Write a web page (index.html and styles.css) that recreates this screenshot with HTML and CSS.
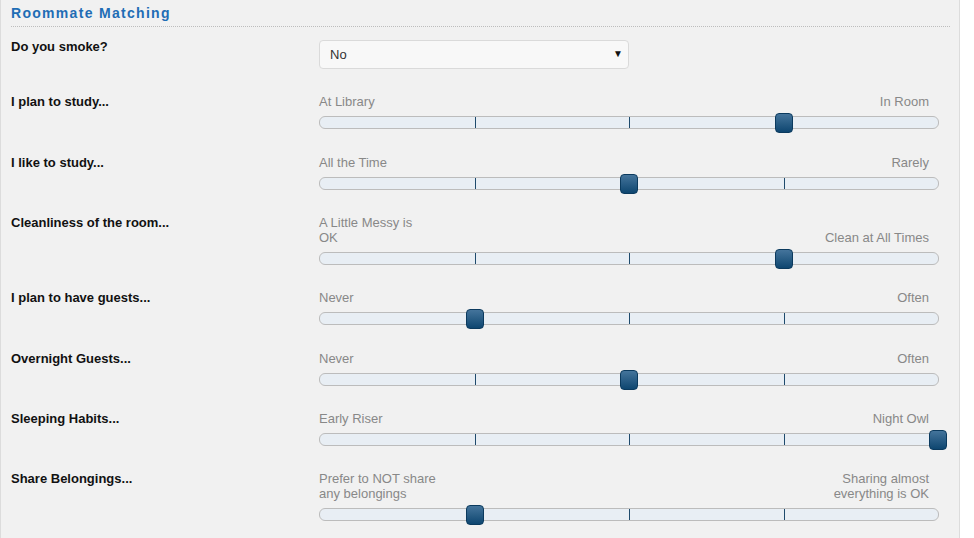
FILE: index.html
```html
<!DOCTYPE html>
<html lang="en">
<head>
    <meta charset="UTF-8">
    <title>Roommate Matching</title>
    <link rel="stylesheet" href="styles.css">
</head>
<body>
    <div class="panel">
        <h2 class="title">Roommate Matching</h2>

        <div class="row">
            <div class="question">Do you smoke?</div>
            <div class="answer">
                <div class="select-wrap">
                    <select class="select">
                        <option>No</option>
                        <option>Yes</option>
                    </select>
                    <span class="arrow">&#9660;</span>
                </div>
            </div>
        </div>

        <div class="row">
            <div class="question">I plan to study...</div>
            <div class="answer">
                <div class="ends"><span class="low">At Library</span><span class="high">In Room</span></div>
                <div class="track"><i class="tick t1"></i><i class="tick t2"></i><i class="tick t3"></i><span class="handle" style="left: 75%"></span></div>
            </div>
        </div>

        <div class="row">
            <div class="question">I like to study...</div>
            <div class="answer">
                <div class="ends"><span class="low">All the Time</span><span class="high">Rarely</span></div>
                <div class="track"><i class="tick t1"></i><i class="tick t2"></i><i class="tick t3"></i><span class="handle" style="left: 50%"></span></div>
            </div>
        </div>

        <div class="row">
            <div class="question">Cleanliness of the room...</div>
            <div class="answer">
                <div class="ends"><span class="low narrow">A Little Messy is OK</span><span class="high">Clean at All Times</span></div>
                <div class="track"><i class="tick t1"></i><i class="tick t2"></i><i class="tick t3"></i><span class="handle" style="left: 75%"></span></div>
            </div>
        </div>

        <div class="row">
            <div class="question">I plan to have guests...</div>
            <div class="answer">
                <div class="ends"><span class="low">Never</span><span class="high">Often</span></div>
                <div class="track"><i class="tick t1"></i><i class="tick t2"></i><i class="tick t3"></i><span class="handle" style="left: 25%"></span></div>
            </div>
        </div>

        <div class="row">
            <div class="question">Overnight Guests...</div>
            <div class="answer">
                <div class="ends"><span class="low">Never</span><span class="high">Often</span></div>
                <div class="track"><i class="tick t1"></i><i class="tick t2"></i><i class="tick t3"></i><span class="handle" style="left: 50%"></span></div>
            </div>
        </div>

        <div class="row">
            <div class="question">Sleeping Habits...</div>
            <div class="answer">
                <div class="ends"><span class="low">Early Riser</span><span class="high">Night Owl</span></div>
                <div class="track"><i class="tick t1"></i><i class="tick t2"></i><i class="tick t3"></i><span class="handle" style="left: 100%"></span></div>
            </div>
        </div>

        <div class="row">
            <div class="question">Share Belongings...</div>
            <div class="answer">
                <div class="ends"><span class="low">Prefer to NOT share any belongings</span><span class="high">Sharing almost everything is OK</span></div>
                <div class="track"><i class="tick t1"></i><i class="tick t2"></i><i class="tick t3"></i><span class="handle" style="left: 25%"></span></div>
            </div>
        </div>
    </div>
</body>
</html>
```

FILE: styles.css
```css
body {
    margin: 0;
    background-color: #fff;
    font-family: "Liberation Sans", Arial, sans-serif;
    font-size: 13px;
}
.panel {
    width: 939px;
    min-height: 560px;
    padding: 5px 9px 0 10px;
    background-color: #f1f1f1;
    border-left: 1px solid #dcdcdc;
    border-right: 1px solid #dcdcdc;
}
.title {
    margin: 0 0 12px 0;
    padding-bottom: 5px;
    font-size: 14px;
    line-height: 16px;
    letter-spacing: 1.3px;
    color: #1f6db5;
    border-bottom: 1px dotted #bdbdbd;
}
.row {
    display: flex;
    margin-bottom: 25.35px;
}
.question {
    width: 308px;
    font-weight: bold;
    line-height: 15px;
    color: #111;
}
.answer {
    width: 620px;
}
.select-wrap {
    position: relative;
    width: 310px;
    margin-top: 1px;
}
.select {
    appearance: none;
    -webkit-appearance: none;
    width: 310px;
    height: 29px;
    padding: 0 10px;
    font-family: inherit;
    font-size: 13px;
    color: #333;
    background-color: #f8f8f8;
    border: 1px solid #dadada;
    border-radius: 4px;
}
.arrow {
    position: absolute;
    right: 6px;
    top: 8px;
    font-size: 10px;
    color: #111;
    pointer-events: none;
}
.ends {
    display: flex;
    justify-content: space-between;
    align-items: flex-end;
    padding-right: 10px;
    line-height: 15px;
    color: #888;
}
.ends span {
    max-width: 118px;
}
.ends .narrow {
    max-width: 105px;
}
.ends .high {
    text-align: right;
}
.track {
    position: relative;
    height: 11px;
    margin-top: 7px;
    background-color: #e8eef4;
    border: 1px solid #bcbcbc;
    border-radius: 6px;
}
.tick {
    position: absolute;
    top: 0;
    width: 1px;
    height: 11px;
    background-color: #1e4a6c;
}
.t1 { left: 25%; }
.t2 { left: 50%; }
.t3 { left: 75%; }
.handle {
    position: absolute;
    top: -4px;
    width: 16px;
    height: 18px;
    margin-left: -9px;
    background: linear-gradient(#44749b, #0e4670);
    border: 1px solid #0b3a5e;
    border-radius: 4px;
}
```
